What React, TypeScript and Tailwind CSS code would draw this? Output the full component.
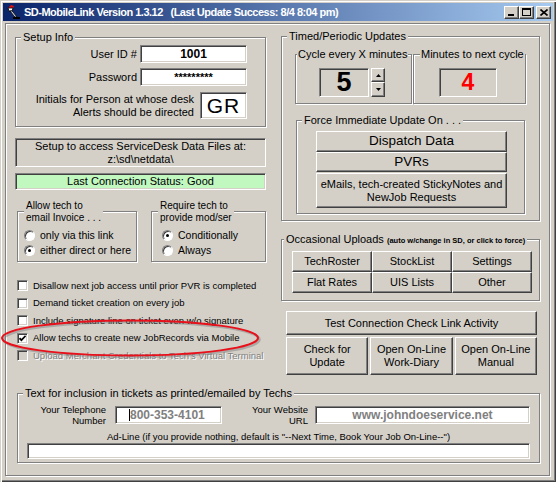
import React from 'react';
import type { ReactNode } from 'react';

// classic 3D edges
const sunken =
  'border border-t-[#808080] border-l-[#808080] border-b-white border-r-white shadow-[inset_1px_1px_0_#404040,inset_-1px_-1px_0_#d4d0c8]';
const raised =
  'border border-t-white border-l-white border-b-[#404040] border-r-[#404040] shadow-[inset_-1px_-1px_0_#808080]';
const etched = 'border border-[#808080] shadow-[inset_1px_1px_0_#fff,1px_1px_0_#fff]';

interface GroupBoxProps {
  legend: ReactNode;
  className?: string;
  legendClass?: string;
  children?: ReactNode;
}

const GroupBox: React.FC<GroupBoxProps> = ({ legend, className = '', legendClass = '', children }) => (
  <div className={`relative ${etched} ${className}`}>
    <div
      className={`absolute bg-[#d4d0c8] px-[2px] whitespace-nowrap ${
        legendClass || 'left-[5px] -top-[8px] text-[11px] leading-[14px]'
      }`}
    >
      {legend}
    </div>
    {children}
  </div>
);

const Btn: React.FC<{ className?: string; children: ReactNode }> = ({ className = '', children }) => (
  <button
    type="button"
    className={`flex items-center justify-center text-center bg-[#d4d0c8] text-black ${raised} ${className}`}
  >
    {children}
  </button>
);

const Check: React.FC<{ label: string; checked?: boolean; disabled?: boolean }> = ({
  label,
  checked,
  disabled,
}) => (
  <div className="flex items-center h-[17.5px] gap-[5px]">
    <span
      className={`w-[11px] h-[11px] flex items-center justify-center ${sunken} ${
        disabled ? 'bg-[#d4d0c8]' : 'bg-white'
      }`}
    >
      {checked && (
        <svg width="7" height="7" viewBox="0 0 7 7">
          <path d="M0.5 3.2 L2.4 5.2 L6.6 0.8" stroke="#000" strokeWidth="1.7" fill="none" />
        </svg>
      )}
    </span>
    <span
      className={`text-[9.5px] leading-[12px] whitespace-nowrap ${
        disabled ? 'text-[#808080] [text-shadow:1px_1px_0_#fff]' : ''
      }`}
    >
      {label}
    </span>
  </div>
);

const Radio: React.FC<{ label: string; checked?: boolean }> = ({ label, checked }) => (
  <div className="flex items-center h-[15px] gap-[5px]">
    <span className="w-[11px] h-[11px] rounded-full bg-white flex items-center justify-center border border-t-[#808080] border-l-[#808080] border-b-white border-r-white shadow-[inset_1px_1px_0_#404040]">
      {checked && <span className="w-[3px] h-[3px] rounded-full bg-black" />}
    </span>
    <span className="text-[10.5px] leading-[13px] whitespace-nowrap">{label}</span>
  </div>
);

const CaptionBtn: React.FC<{ children: ReactNode; className?: string }> = ({ children, className = '' }) => (
  <div className={`w-[15px] h-[13px] bg-[#d4d0c8] flex items-center justify-center ${raised} ${className}`}>
    {children}
  </div>
);

const AppIcon = () => (
  <svg width="16" height="16" viewBox="0 0 16 16">
    <path d="M3 4 L6 1 L9 2 L8 4 Z" fill="#e01010" />
    <path d="M3 4 L8 4 L7 7 L4 7 Z" fill="#fff" stroke="#000" strokeWidth="0.8" />
    <path d="M5 7 L7 7 L12 13 L10 13 Z" fill="#fff" stroke="#000" strokeWidth="0.8" />
    <path d="M8 13 L15 13 L15 15 L8 15 Z" fill="#000" />
  </svg>
);

export default function App() {
  return (
    <div className="relative w-[556px] h-[482px] overflow-hidden bg-[#d4d0c8] p-[2px] text-black font-['Liberation_Sans',Arial,sans-serif] shadow-[inset_1px_1px_0_#d4d0c8,inset_2px_2px_0_#fff,inset_-1px_-1px_0_#404040,inset_-2px_-2px_0_#808080]">
      {/* title bar */}
      <div className="mx-[1px] mt-[1px] h-[18px] flex items-center bg-[linear-gradient(to_right,#0a246a,#a6caf0)]">
        <div className="ml-[2px] w-[16px] h-[16px]">
          <AppIcon />
        </div>
        <div className="ml-[3px] text-white font-bold text-[11px] tracking-[-0.5px] leading-[16px] whitespace-nowrap">
          SD-MobileLink Version 1.3.12&nbsp;&nbsp;&nbsp;(Last Update Success: 8/4 8:04 pm)
        </div>
        <div className="ml-auto mr-[2px] flex items-center">
          <CaptionBtn>
            <span className="block w-[6px] h-[2px] bg-black mt-[6px] -ml-[1px]" />
          </CaptionBtn>
          <CaptionBtn>
            <span className="block w-[9px] h-[8px] border border-black border-t-2" />
          </CaptionBtn>
          <CaptionBtn className="ml-[2px]">
            <svg width="8" height="7" viewBox="0 0 8 7">
              <path d="M0.5 0.5 L7.5 6.5 M7.5 0.5 L0.5 6.5" stroke="#000" strokeWidth="1.6" />
            </svg>
          </CaptionBtn>
        </div>
      </div>

      {/* client frame */}
      <div className={`ml-[3px] mt-[2px] w-[545px] h-[453px] ${etched}`}>
        <div className="flex pt-[12px] pl-[9px]">
          {/* left column */}
          <div className="w-[251px] flex flex-col">
            <GroupBox legend="Setup Info" className="mt-[1px] h-[90px]">
              <div className="flex flex-col items-end pr-[18px] pt-[7px]">
                <div className="flex items-center gap-[3px]">
                  <span className="text-[11px]">User ID #</span>
                  <div className={`w-[107px] h-[18px] bg-white flex items-center justify-center text-[12px] font-bold ${sunken}`}>
                    1001
                  </div>
                </div>
                <div className="flex items-center gap-[3px] mt-[5px]">
                  <span className="text-[11px]">Password</span>
                  <div className={`w-[107px] h-[18px] bg-white flex items-center justify-center text-[11px] font-bold ${sunken}`}>
                    *********
                  </div>
                </div>
                <div className="flex items-center gap-[6px] mt-[6px]">
                  <span className="text-[11px] leading-[13px] text-right">
                    Initials for Person at whose desk
                    <br />
                    Alerts should be directed
                  </span>
                  <div className={`w-[47px] h-[27px] bg-white flex items-center justify-center text-[21px] tracking-[1px] ${sunken}`}>
                    GR
                  </div>
                </div>
              </div>
            </GroupBox>

            <div className={`mt-[11px] h-[29px] flex items-center justify-center text-center text-[11px] leading-[13px] ${sunken}`}>
              <span>
                Setup to access ServiceDesk Data Files at:
                <br />
                z:\sd\netdata\
              </span>
            </div>
            <div className={`mt-[6px] h-[17px] bg-[#c0f8c0] flex items-center justify-center text-[11px] ${sunken}`}>
              Last Connection Status: Good
            </div>

            <div className="flex mt-[21px]">
              <GroupBox
                className="ml-[2px] w-[120px] h-[51px]"
                legendClass="left-[6px] -top-[12px] text-[10px] leading-[12px]"
                legend={
                  <>
                    Allow tech to
                    <br />
                    email Invoice . . .
                  </>
                }
              >
                <div className="pl-[6px] pt-[16px]">
                  <Radio label="only via this link" />
                  <Radio label="either direct or here" checked />
                </div>
              </GroupBox>
              <GroupBox
                className="ml-[14px] w-[115px] h-[51px]"
                legendClass="left-[6px] -top-[12px] text-[10px] leading-[12px]"
                legend={
                  <>
                    Require tech to
                    <br />
                    provide mod/ser
                  </>
                }
              >
                <div className="pl-[10px] pt-[16px]">
                  <Radio label="Conditionally" checked />
                  <Radio label="Always" />
                </div>
              </GroupBox>
            </div>

            <div className="mt-[15px] pl-[2px] flex flex-col">
              <Check label="Disallow next job access until prior PVR is completed" />
              <Check label="Demand ticket creation on every job" />
              <Check label="Include signature line on ticket even w/o signature" />
              <Check label="Allow techs to create new JobRecords via Mobile" checked />
              <Check label="Upload Merchant Credentials to Tech's Virtual Terminal" disabled />
            </div>
          </div>

          {/* right column */}
          <div className="w-[259px] ml-[15px] flex flex-col">
            <GroupBox legend="Timed/Periodic Updates" className="h-[185px]">
              <div className="flex mt-[17px] ml-[13px]">
                <GroupBox
                  legend="Cycle every X minutes"
                  className="w-[117px] h-[50px]"
                  legendClass="left-[1px] -top-[8px] text-[11px] leading-[14px] !px-[1px]"
                >
                  <div className="flex ml-[23px] mt-[13px]">
                    <div className={`w-[50px] h-[29px] flex items-center justify-center text-[27px] font-bold ${sunken}`}>
                      5
                    </div>
                    <div className="ml-[2px] flex flex-col">
                      <div className={`w-[14px] h-[14px] flex items-center justify-center ${raised}`}>
                        <svg width="5" height="3" viewBox="0 0 5 3">
                          <path d="M0 3 L2.5 0 L5 3 Z" fill="#000" />
                        </svg>
                      </div>
                      <div className={`w-[14px] h-[15px] flex items-center justify-center ${raised}`}>
                        <svg width="5" height="3" viewBox="0 0 5 3">
                          <path d="M0 0 L2.5 3 L5 0 Z" fill="#000" />
                        </svg>
                      </div>
                    </div>
                  </div>
                </GroupBox>
                <GroupBox
                  legend="Minutes to next cycle"
                  className="ml-[1px] w-[113px] h-[50px]"
                  legendClass="left-[6px] -top-[8px] text-[11px] leading-[14px] !px-[1px]"
                >
                  <div className={`ml-[25px] mt-[13px] w-[58px] h-[29px] flex items-center justify-center text-[23px] font-bold text-[#ff0000] ${sunken}`}>
                    4
                  </div>
                </GroupBox>
              </div>
              <GroupBox legend="Force Immediate Update On . . ." className="ml-[14px] mt-[16px] w-[229px] h-[94px]">
                <div className="ml-[19px] mt-[10px] w-[191px] flex flex-col">
                  <Btn className="h-[21px] text-[13.5px]">Dispatch Data</Btn>
                  <Btn className="h-[20px] text-[13.5px]">PVRs</Btn>
                  <Btn className="mt-[1px] h-[35px] text-[11px] leading-[13px]">
                    eMails, tech-created StickyNotes and
                    <br />
                    NewJob Requests
                  </Btn>
                </div>
              </GroupBox>
            </GroupBox>

            <GroupBox
              className="mt-[18px] h-[62px]"
              legendClass="left-[2px] -top-[8px] text-[11px] leading-[14px]"
              legend={
                <>
                  Occasional Uploads{' '}
                  <span className="text-[7.5px] font-bold">(auto w/change in SD, or click to force)</span>
                </>
              }
            >
              <div className="ml-[10px] mt-[11px] w-[240px] grid grid-cols-3">
                {['TechRoster', 'StockList', 'Settings', 'Flat Rates', 'UIS Lists', 'Other'].map((t) => (
                  <Btn key={t} className="h-[21px] text-[11px]">
                    {t}
                  </Btn>
                ))}
              </div>
            </GroupBox>

            <div className="ml-[5px] mt-[10px] w-[251px] flex flex-col">
              <Btn className="h-[24px] text-[11px]">Test Connection Check Link Activity</Btn>
              <div className="mt-[2px] flex gap-[2px]">
                <Btn className="flex-1 h-[38px] text-[11px] leading-[13px]">
                  Check for
                  <br />
                  Update
                </Btn>
                <Btn className="flex-1 h-[38px] text-[11px] leading-[13px]">
                  Open On-Line
                  <br />
                  Work-Diary
                </Btn>
                <Btn className="flex-1 h-[38px] text-[11px] leading-[13px]">
                  Open On-Line
                  <br />
                  Manual
                </Btn>
              </div>
            </div>
          </div>
        </div>

        {/* bottom group */}
        <GroupBox
          legend="Text for inclusion in tickets as printed/emailed by Techs"
          className="ml-[11px] mt-[18px] w-[523px] h-[70px]"
        >
          <div className="flex items-center mt-[10px]">
            <div className="w-[88px] text-right text-[9.5px] leading-[11px]">
              Your Telephone
              <br />
              Number
            </div>
            <div className={`ml-[9px] w-[107px] h-[18px] bg-white flex items-center pl-[13px] ${sunken}`}>
              <span className="w-[1px] h-[12px] bg-black" />
              <span className="text-[12px] text-[#808080] font-bold">800-353-4101</span>
            </div>
            <div className="w-[86px] text-right text-[9.5px] leading-[11px]">
              Your Website
              <br />
              URL
            </div>
            <div className={`ml-[7px] w-[215px] h-[18px] bg-white flex items-center justify-center text-[12px] font-bold text-[#808080] ${sunken}`}>
              www.johndoeservice.net
            </div>
          </div>
          <div className="mt-[5px] text-center text-[9.5px] leading-[12px]">
            Ad-Line (if you provide nothing, default is "--Next Time, Book Your Job On-Line--")
          </div>
          <div className={`ml-[9px] mt-[0px] w-[503px] h-[16px] bg-white ${sunken}`} />
        </GroupBox>
      </div>

      {/* red annotation ellipse */}
      <svg className="absolute left-0 top-[316px] pointer-events-none" width="266" height="46" viewBox="0 0 266 46">
        <ellipse cx="131.5" cy="23.5" rx="128" ry="17.5" fill="none" stroke="#7a7a7a" strokeOpacity="0.45" strokeWidth="2.5" />
        <ellipse cx="130" cy="22" rx="128" ry="17.5" fill="none" stroke="#e8101a" strokeWidth="2" />
      </svg>
    </div>
  );
}
